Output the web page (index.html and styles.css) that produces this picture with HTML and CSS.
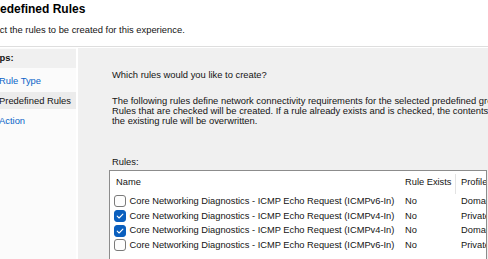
FILE: index.html
```html
<!DOCTYPE html>
<html>
<head>
<meta charset="utf-8">
<link rel="stylesheet" href="styles.css">
</head>
<body>
<div class="page">
  <header class="head">
    <div class="title">Predefined Rules</div>
    <div class="subtitle">Select the rules to be created for this experience.</div>
  </header>
  <div class="body">
    <aside class="steps">
      <div class="steps-head"><span class="steps-label">Steps:</span></div>
      <ul class="step-list">
        <li class="step link"><span>Rule Type</span></li>
        <li class="step current"><span>Predefined Rules</span></li>
        <li class="step link"><span>Action</span></li>
      </ul>
    </aside>
    <main class="main">
      <p class="question">Which rules would you like to create?</p>
      <p class="info">The following rules define network connectivity requirements for the selected predefined group.<br>Rules that are checked will be created. If a rule already exists and is checked, the contents of<br>the existing rule will be overwritten.</p>
      <div class="rules-label">Rules:</div>
      <div class="listbox">
        <div class="row hdr">
          <div class="c-name">Name</div>
          <div class="c-exists">Rule Exists</div>
          <div class="c-profile sep">Profile</div>
        </div>
        <div class="row">
          <div class="c-name"><span class="cb"></span>Core Networking Diagnostics - ICMP Echo Request (ICMPv6-In)</div>
          <div class="c-exists">No</div>
          <div class="c-profile">Domain</div>
        </div>
        <div class="row">
          <div class="c-name"><span class="cb on"><svg viewBox="0 0 12 12" width="12" height="12"><path d="M3.2 6.2 L5.1 8 L8.9 4.2" fill="none" stroke="#fff" stroke-width="1.1" stroke-linecap="round" stroke-linejoin="round"/></svg></span>Core Networking Diagnostics - ICMP Echo Request (ICMPv4-In)</div>
          <div class="c-exists">No</div>
          <div class="c-profile">Private</div>
        </div>
        <div class="row">
          <div class="c-name"><span class="cb on"><svg viewBox="0 0 12 12" width="12" height="12"><path d="M3.2 6.2 L5.1 8 L8.9 4.2" fill="none" stroke="#fff" stroke-width="1.1" stroke-linecap="round" stroke-linejoin="round"/></svg></span>Core Networking Diagnostics - ICMP Echo Request (ICMPv4-In)</div>
          <div class="c-exists">No</div>
          <div class="c-profile">Domain</div>
        </div>
        <div class="row">
          <div class="c-name"><span class="cb"></span>Core Networking Diagnostics - ICMP Echo Request (ICMPv6-In)</div>
          <div class="c-exists">No</div>
          <div class="c-profile">Private</div>
        </div>
      </div>
    </main>
  </div>
</div>
</body>
</html>
```
FILE: styles.css
```css
html, body {
  margin: 0;
  padding: 0;
  background: #ffffff;
}
body {
  width: 488px;
  height: 259px;
  overflow: hidden;
  font-family: "Liberation Sans", Arial, sans-serif;
  font-size: 9.4px;
  color: #141414;
}
.page {
  display: flex;
  flex-direction: column;
  height: 259px;
}
.head {
  box-sizing: border-box;
  height: 47px;
  padding-top: 1.5px;
  border-bottom: 1px solid #dedede;
}
.title {
  font-size: 12px;
  font-weight: bold;
  line-height: 14px;
  margin-left: -12.7px;
  white-space: nowrap;
  color: #000;
}
.subtitle {
  margin-top: 8px;
  line-height: 12px;
  margin-left: -19px;
  white-space: nowrap;
}
.body {
  flex: 1;
  display: flex;
  gap: 2px;
  margin-top: 1px;
  min-height: 0;
}
.steps {
  width: 76px;
  flex: none;
  background: #fbfbfb;
  padding-top: 1px;
  overflow: hidden;
}
.steps-head {
  background: #f0f0f0;
  height: 19px;
  line-height: 17px;
  white-space: nowrap;
}
.steps-label {
  margin-left: -15px;
  font-weight: bold;
}
.step-list {
  list-style: none;
  margin: 0;
  padding: 4px 0 0 0;
}
.step {
  height: 17px;
  line-height: 17px;
  margin-bottom: 3px;
  white-space: nowrap;
}
.step span {
  margin-left: -1px;
}
.step.link {
  color: #0a64c8;
}
.step.current {
  background: #ececec;
}
.main {
  flex: 1;
  background: #f0f0f0;
  padding: 21px 0 0 31px;
  overflow: hidden;
  min-width: 0;
}
.question {
  margin: 0;
  padding-left: 3px;
  line-height: 12px;
  white-space: nowrap;
}
.info {
  margin: 15px 0 0 0;
  padding-left: 3px;
  line-height: 10px;
  white-space: nowrap;
}
.rules-label {
  margin-top: 30px;
  padding-left: 3px;
  line-height: 12px;
}
.listbox {
  margin-top: 2px;
  width: 378px;
  height: 120px;
  box-sizing: border-box;
  border: 1px solid #8c8c8c;
  background: #ffffff;
  overflow: hidden;
  font-size: 9.3px;
}
.row {
  display: flex;
  height: 14.7px;
  line-height: 14.7px;
  white-space: nowrap;
}
.row.hdr {
  height: 23px;
  line-height: 23px;
}
.c-name {
  width: 289px;
  flex: none;
  padding-left: 4px;
  box-sizing: border-box;
  display: flex;
  align-items: center;
  overflow: hidden;
}
.hdr .c-name {
  padding-left: 6px;
}
.c-exists {
  width: 56px;
  flex: none;
  padding-left: 6px;
  box-sizing: border-box;
}
.c-profile {
  flex: none;
  width: 60px;
  padding-left: 6px;
  box-sizing: border-box;
}
.c-profile.sep {
  position: relative;
}
.c-profile.sep::before {
  content: "";
  position: absolute;
  left: 0;
  top: 3px;
  bottom: 0;
  border-left: 1px solid #e3e3e3;
}
.cb {
  width: 12px;
  height: 12px;
  box-sizing: border-box;
  border: 1px solid #7a7a7a;
  border-radius: 3px;
  background: #fdfdfd;
  margin-right: 3.5px;
  flex: none;
  display: inline-flex;
}
.cb.on {
  background: #0a5fbe;
  border-color: #0a5fbe;
}
.cb svg {
  margin: -1px;
}
```
